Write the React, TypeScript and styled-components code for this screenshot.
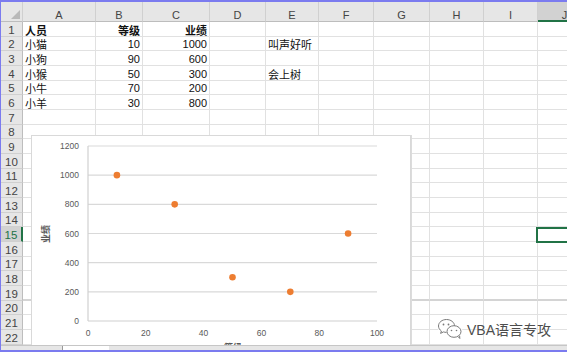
import React from 'react';
import styled, { createGlobalStyle } from 'styled-components';

const Global = createGlobalStyle`
  html, body { margin: 0; padding: 0; background: #fff; }
  body {
    width: 567px; height: 352px; overflow: hidden;
    font-family: "Liberation Sans", "Noto Sans CJK SC", sans-serif;
  }
`;

const COLS = [73, 47, 67, 56, 53, 55, 56, 54, 54, 54];
const LETTERS = ['A', 'B', 'C', 'D', 'E', 'F', 'G', 'H', 'I', 'J'];
const SEL_COL = 9;
const SEL_ROW = 15;
const BREAK_ROW = 19;

type CellData = { t: string; right?: boolean; bold?: boolean };
const DATA: Record<number, Record<number, CellData>> = {
  1: { 0: { t: '人员', bold: true }, 1: { t: '等级', right: true, bold: true }, 2: { t: '业绩', right: true, bold: true } },
  2: { 0: { t: '小猫' }, 1: { t: '10', right: true }, 2: { t: '1000', right: true }, 4: { t: '叫声好听' } },
  3: { 0: { t: '小狗' }, 1: { t: '90', right: true }, 2: { t: '600', right: true } },
  4: { 0: { t: '小猴' }, 1: { t: '50', right: true }, 2: { t: '300', right: true }, 4: { t: '会上树' } },
  5: { 0: { t: '小牛' }, 1: { t: '70', right: true }, 2: { t: '200', right: true } },
  6: { 0: { t: '小羊' }, 1: { t: '30', right: true }, 2: { t: '800', right: true } },
};

const rowHeights = Array.from({ length: 22 }, (_, i) => {
  const a = Math.round(20 + (i + 1) * (44 / 3));
  const b = Math.round(20 + i * (44 / 3));
  return a - b;
});

const Frame = styled.div`
  width: 567px; height: 352px; box-sizing: border-box;
  border-top: 2px solid #7b7bef;
  border-left: 1px solid #7b7bef;
  border-bottom: 2px solid #7b7bef;
  display: flex; flex-direction: column;
  overflow: hidden; position: relative;
`;

const Sheet = styled.div`
  flex: 1; position: relative; overflow: hidden;
`;

const Row = styled.div<{ $h: number }>`
  display: flex; height: ${p => p.$h}px;
`;

const Corner = styled.div`
  width: 22px; flex: none; box-sizing: border-box;
  background: #e6e6e6;
  border-right: 1px solid #d0d0d0;
  border-bottom: 1px solid #bdbdbd;
  position: relative;
  &::after {
    content: ''; position: absolute; right: 2px; bottom: 2px;
    width: 0; height: 0;
    border-left: 9px solid transparent;
    border-bottom: 9px solid #b9b9b9;
  }
`;

const ColHead = styled.div<{ $w: number; $sel?: boolean }>`
  width: ${p => p.$w}px; flex: none; box-sizing: border-box;
  background: ${p => (p.$sel ? '#d2d2d2' : '#e6e6e6')};
  border-right: 1px solid #d0d0d0;
  border-bottom: ${p => (p.$sel ? '2px solid #217346' : '1px solid #bdbdbd')};
  color: #444; font-size: 11px; text-align: center;
  padding-top: 8px; line-height: 11px;
`;

const RowHead = styled.div<{ $sel?: boolean }>`
  width: 22px; flex: none; box-sizing: border-box;
  background: ${p => (p.$sel ? '#d2d2d2' : '#e6e6e6')};
  border-right: ${p => (p.$sel ? '2px solid #217346' : '1px solid #bdbdbd')};
  border-bottom: 1px solid #d0d0d0;
  color: ${p => (p.$sel ? '#217346' : '#444')};
  font-size: 11.5px; text-align: center;
  display: flex; align-items: center; justify-content: center;
  padding-top: 1px;
`;

const Cell = styled.div<{ $w: number; $right?: boolean; $bold?: boolean; $break?: boolean }>`
  width: ${p => p.$w}px; flex: none; box-sizing: border-box;
  border-right: 1px solid #e1e1e1;
  border-bottom: ${p => (p.$break ? '2px solid #d4d4d4' : '1px solid #e1e1e1')};
  font-size: 11px; color: #111;
  font-weight: ${p => (p.$bold ? 700 : 400)};
  display: flex; align-items: center;
  justify-content: ${p => (p.$right ? 'flex-end' : 'flex-start')};
  padding: 1px 2px 0 2px; white-space: nowrap;
`;

const Selection = styled.div`
  position: absolute; left: 535px; top: 225px;
  width: 60px; height: 16px; box-sizing: border-box;
  border: 2px solid #217346;
`;

const ChartBox = styled.div`
  position: absolute; left: 30px; top: 133px;
  width: 380px; height: 240px; box-sizing: border-box;
  background: #fff;
  border: 1px solid #d9d9d9;
  box-shadow: 1px 0 0 #dcdcdc;
`;

const TabBar = styled.div`
  height: 5px; flex: none; box-sizing: border-box;
  background: #e6e6e6;
  border-top: 1px solid #c6c6c6;
  display: flex;
`;

const TabGap = styled.div<{ $w: number }>`
  width: ${p => p.$w}px; flex: none;
`;

const ActiveTab = styled.div`
  width: 46px; flex: none; background: #fff;
  border-left: 1px solid #9a9a9a;
`;

const Watermark = styled.div`
  position: absolute; left: 436px; top: 316px;
  display: flex; align-items: center; gap: 4px;
`;

const WatermarkText = styled.span`
  font-family: "Liberation Sans", "Noto Sans CJK SC", sans-serif;
  font-size: 14px; color: #4d4d4d;
  text-shadow: 0 0 2px #fff, 0 0 1px #fff;
  letter-spacing: 0;
`;

const X0 = 56, X1 = 345, Y0 = 185, Y1 = 10;
const xs = (v: number) => X0 + (v / 100) * (X1 - X0);
const ys = (v: number) => Y0 - (v / 1200) * (Y0 - Y1);
const POINTS: [number, number][] = [[10, 1000], [90, 600], [50, 300], [70, 200], [30, 800]];

const ScatterChart: React.FC = () => (
  <svg width="378" height="238" viewBox="0 0 378 238" style={{ display: 'block' }}>
    {[0, 200, 400, 600, 800, 1000, 1200].map(v => (
      <g key={v}>
        <line x1={X0} x2={X1} y1={ys(v)} y2={ys(v)} stroke={v === 0 ? '#d0d0d0' : '#d9d9d9'} strokeWidth="1.2" />
        <text x={47} y={ys(v) + 3} textAnchor="end" fontSize="8.5" fill="#595959"
          fontFamily='"Liberation Sans", sans-serif'>{v}</text>
      </g>
    ))}
    <line x1={X0} x2={X0} y1={Y1} y2={Y0} stroke="#d0d0d0" strokeWidth="1.2" />
    {[0, 20, 40, 60, 80, 100].map(v => (
      <text key={v} x={xs(v)} y={200} textAnchor="middle" fontSize="8.5" fill="#595959"
        fontFamily='"Liberation Sans", sans-serif'>{v}</text>
    ))}
    <text x={17} y={98} transform="rotate(-90 17 98)" textAnchor="middle" fontSize="9" fontWeight="700" fill="#595959"
      fontFamily='"Noto Sans CJK SC", sans-serif'>业绩</text>
    <text x={201} y={215} textAnchor="middle" fontSize="9" fontWeight="700" fill="#595959"
      fontFamily='"Noto Sans CJK SC", sans-serif'>等级</text>
    {POINTS.map(([x, y], i) => (
      <circle key={i} cx={xs(x)} cy={ys(y)} r="3.3" fill="#ed7d31" />
    ))}
  </svg>
);

const WeChatIcon: React.FC = () => (
  <svg width="26" height="22" viewBox="0 0 26 22">
    <g fill="none" stroke="#fff" strokeWidth="3">
      <ellipse cx="9.5" cy="8" rx="8" ry="6.5" />
      <ellipse cx="17" cy="13.5" rx="7" ry="5.8" />
    </g>
    <g fill="#fff" stroke="#7a7a7a" strokeWidth="1">
      <path d="M9.5 1.5c-4.4 0-8 2.9-8 6.5 0 2 1.1 3.8 2.9 5l-0.8 2.4 2.9-1.5c0.9 0.3 1.9 0.5 3 0.5" />
      <ellipse cx="17" cy="13.5" rx="7" ry="5.8" />
      <path d="M21 18.5l1.8 2-0.2-2.8" />
    </g>
    <path d="M9.5 1.5c4.4 0 8 2.9 8 6.2" fill="none" stroke="#7a7a7a" strokeWidth="1" />
    <circle cx="6.5" cy="6.5" r="0.9" fill="#7a7a7a" />
    <circle cx="11.5" cy="6.5" r="0.9" fill="#7a7a7a" />
    <circle cx="14.5" cy="12.5" r="0.8" fill="#7a7a7a" />
    <circle cx="19.5" cy="12.5" r="0.8" fill="#7a7a7a" />
  </svg>
);

export default function App() {
  return (
    <>
      <Global />
      <Frame>
        <Sheet>
          <Row $h={20}>
            <Corner />
            {COLS.map((w, i) => (
              <ColHead key={i} $w={w} $sel={i === SEL_COL}>{LETTERS[i]}</ColHead>
            ))}
          </Row>
          {rowHeights.map((h, ri) => {
            const r = ri + 1;
            return (
              <Row key={r} $h={h}>
                <RowHead $sel={r === SEL_ROW}>{r}</RowHead>
                {COLS.map((w, ci) => {
                  const d = DATA[r]?.[ci];
                  return (
                    <Cell key={ci} $w={w} $right={d?.right} $bold={d?.bold} $break={r === BREAK_ROW}>
                      {d?.t}
                    </Cell>
                  );
                })}
              </Row>
            );
          })}
          <Selection />
          <ChartBox>
            <ScatterChart />
          </ChartBox>
        </Sheet>
        <TabBar>
          <TabGap $w={61} />
          <ActiveTab />
        </TabBar>
        <Watermark>
          <WeChatIcon />
          <WatermarkText>VBA语言专攻</WatermarkText>
        </Watermark>
      </Frame>
    </>
  );
}
